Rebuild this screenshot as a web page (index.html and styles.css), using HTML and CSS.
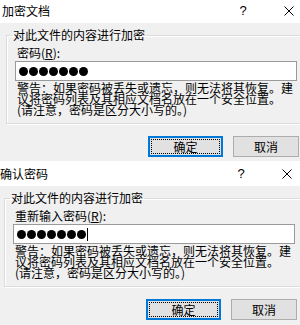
FILE: index.html
```html
<!DOCTYPE html>
<html lang="zh-CN">
<head>
    <meta charset="UTF-8">
    <title>加密文档</title>
    <link rel="stylesheet" href="styles.css">
</head>
<body>
    <!-- 第一个对话框：加密文档 -->
    <div class="dialog dialog-first">
        <div class="titlebar">
            <span class="title">加密文档</span>
            <span class="help">?</span>
            <span class="close">
                <svg width="10" height="10" viewBox="0 0 10 10"><path d="M0.5 0.5 L9.5 9.5 M9.5 0.5 L0.5 9.5" stroke="#000" stroke-width="1" fill="none"/></svg>
            </span>
        </div>
        <div class="body">
            <fieldset class="group">
                <legend>对此文件的内容进行加密</legend>
                <label class="field-label">密码(<u>R</u>):</label>
                <div class="pwd">
                    <i></i><i></i><i></i><i></i><i></i><i></i><i></i>
                </div>
                <p class="warn">警告：如果密码被丢失或遗忘，则无法将其恢复。建议将密码列表及其相应文档名放在一个安全位置。<br>(请注意，密码是区分大小写的。)</p>
            </fieldset>
            <div class="buttons">
                <button class="btn btn-default">确定</button>
                <button class="btn">取消</button>
            </div>
        </div>
    </div>

    <!-- 第二个对话框：确认密码 -->
    <div class="dialog dialog-second">
        <div class="titlebar">
            <span class="title">确认密码</span>
            <span class="help">?</span>
            <span class="close">
                <svg width="10" height="10" viewBox="0 0 10 10"><path d="M0.5 0.5 L9.5 9.5 M9.5 0.5 L0.5 9.5" stroke="#000" stroke-width="1" fill="none"/></svg>
            </span>
        </div>
        <div class="body">
            <fieldset class="group">
                <legend>对此文件的内容进行加密</legend>
                <label class="field-label">重新输入密码(<u>R</u>):</label>
                <div class="pwd">
                    <i></i><i></i><i></i><i></i><i></i><i></i><i></i><b class="caret"></b>
                </div>
                <p class="warn">警告：如果密码被丢失或遗忘，则无法将其恢复。建议将密码列表及其相应文档名放在一个安全位置。<br>(请注意，密码是区分大小写的。)</p>
            </fieldset>
            <div class="buttons">
                <button class="btn btn-default">确定</button>
                <button class="btn">取消</button>
            </div>
        </div>
    </div>
</body>
</html>
```

FILE: styles.css
```css
/* 基础样式 */
* {
    box-sizing: border-box;
}

html, body {
    margin: 0;
    padding: 0;
}

body {
    width: 300px;
    height: 325px;
    overflow: hidden;
    background-color: #f0f0f0;
    font-family: "Noto Sans CJK SC", sans-serif;
    font-size: 12px;
    color: #000;
}

/* 对话框 */
.dialog {
    width: 312px;
    background-color: #f0f0f0;
}

.dialog-first {
    margin-top: -2px;
    height: 163px;
}

.dialog-second {
    margin-left: -2px;
}

/* 标题栏 */
.titlebar {
    height: 25px;
    background-color: #fff;
    display: flex;
    align-items: center;
}

.title {
    flex: 1;
    padding-left: 2px;
    line-height: 25px;
}

.help {
    width: 46px;
    text-align: center;
    font-family: "Liberation Sans", sans-serif;
    font-size: 13px;
}

.close {
    width: 46px;
    display: flex;
    justify-content: center;
}

.body {
    padding: 5px 0 0 6px;
}

/* 分组框 */
.group {
    width: 300px;
    margin: 0;
    padding: 0 0 8px 8px;
    border: 1px solid #dcdcdc;
    box-shadow: inset 1px 1px 0 #fff, 1px 1px 0 #fff;
}

.group legend {
    margin-left: -3px;
    padding: 0 1px;
    line-height: 14px;
}

.field-label {
    display: block;
    margin-top: 4px;
    padding-left: 2px;
    line-height: 14px;
}

/* 密码框 */
.pwd {
    width: 282px;
    height: 20px;
    margin-top: 1px;
    padding-left: 3px;
    border: 1px solid #9a9a9a;
    background-color: #fff;
    display: flex;
    align-items: center;
    gap: 1px;
}

.pwd i {
    width: 9px;
    height: 9px;
    border-radius: 50%;
    background-color: #000;
}

.pwd .caret {
    width: 1px;
    height: 13px;
    margin-left: 0;
    background-color: #000;
}

.warn {
    margin: 1px 0 0;
    padding-left: 2px;
    width: 282px;
    line-height: 11px;
}

/* 按钮 */
.buttons {
    display: flex;
    justify-content: flex-end;
    gap: 10px;
    margin-top: 12px;
    padding-right: 13px;
}

.btn {
    position: relative;
    width: 66px;
    height: 21px;
    padding: 0;
    border: 1px solid #adadad;
    background-color: #e1e1e1;
    font-family: "Noto Sans CJK SC", sans-serif;
    font-size: 12px;
    color: #000;
}

.btn-default {
    width: 75px;
    border-color: #0078d7;
    box-shadow: inset 0 0 0 1px #0078d7;
}

.btn-default::after {
    content: "";
    position: absolute;
    top: 2px;
    left: 2px;
    right: 2px;
    bottom: 2px;
    border: 1px dotted #000;
}
```
